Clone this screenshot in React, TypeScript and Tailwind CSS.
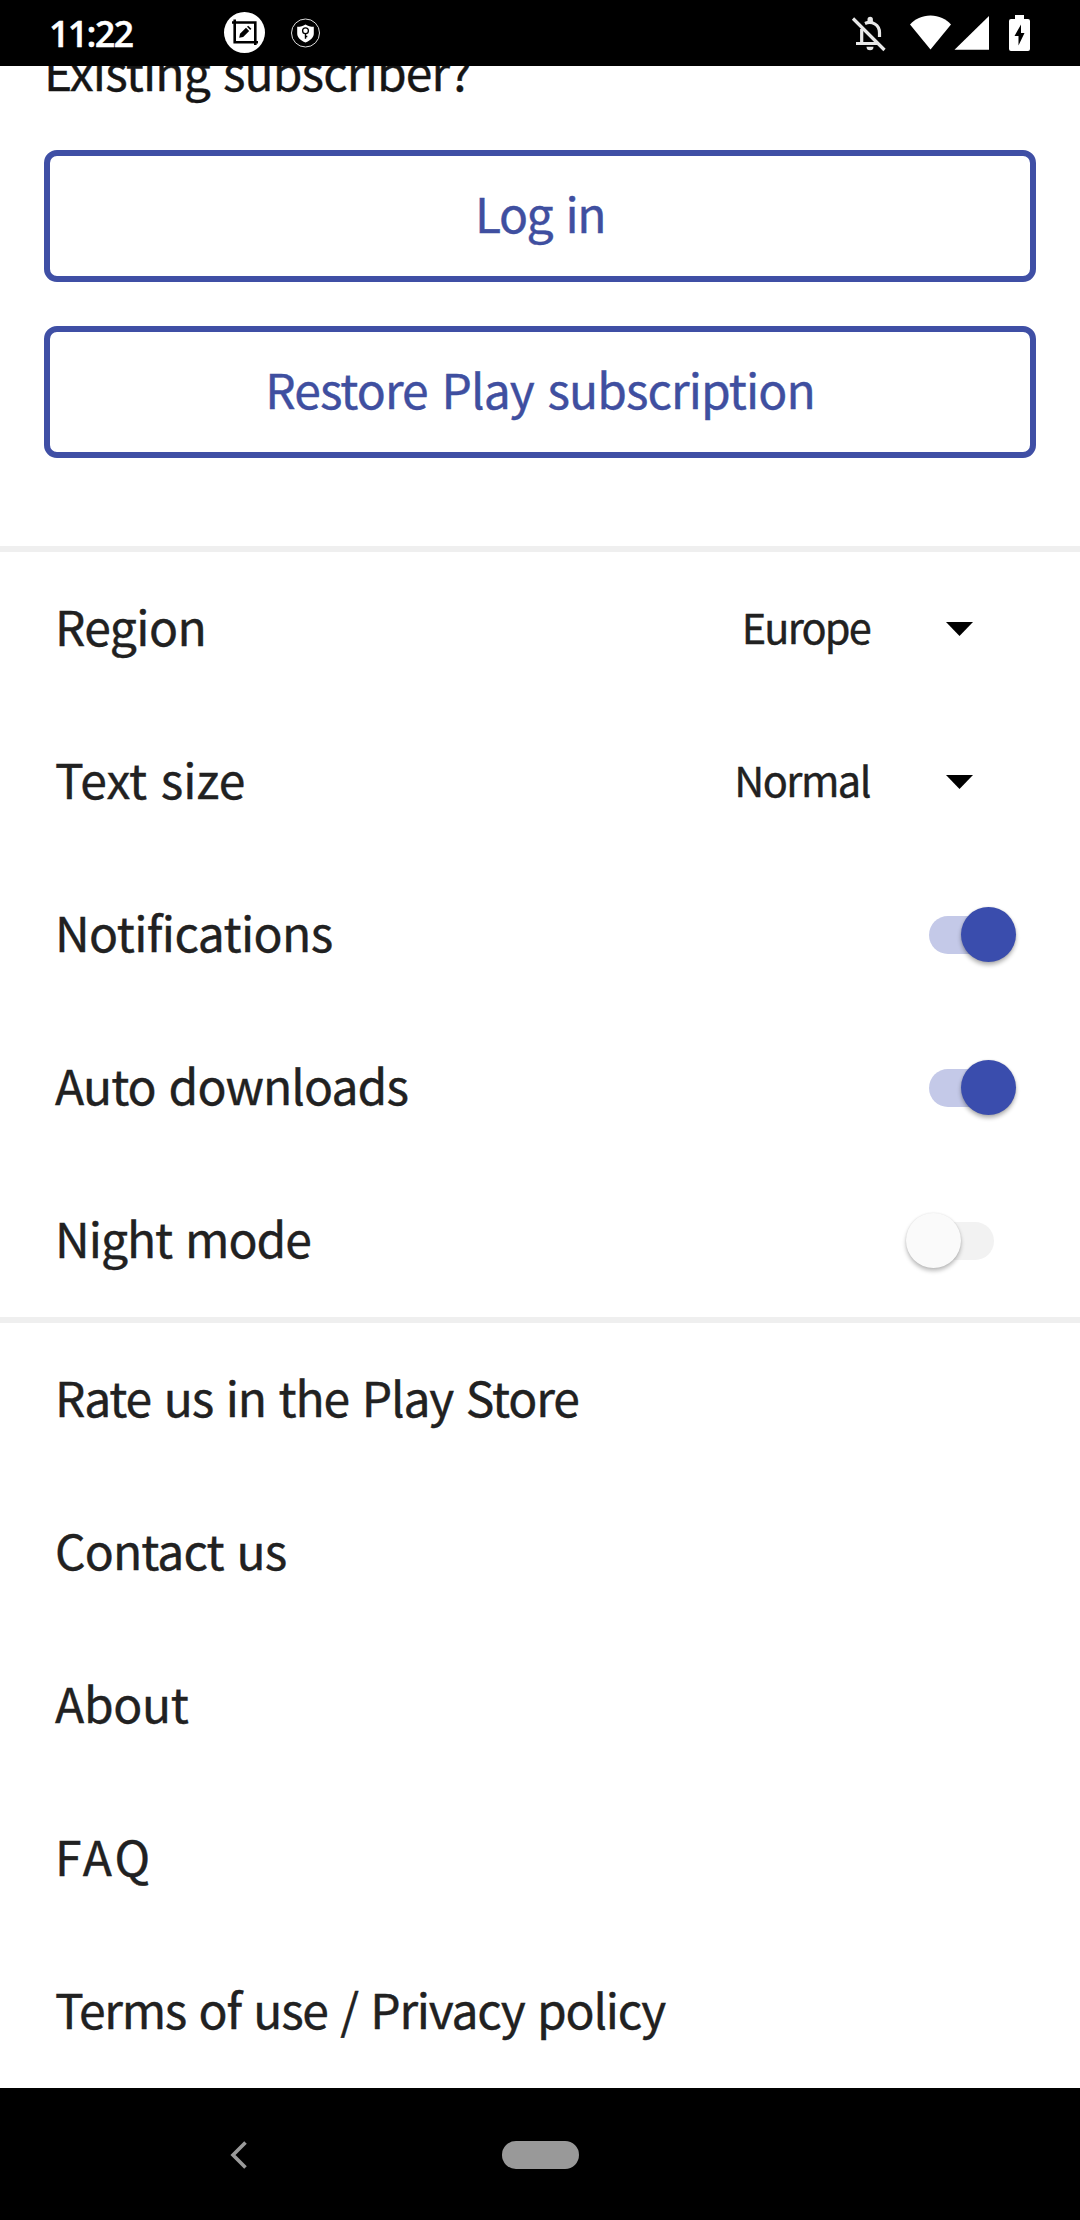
import { useState } from 'react'
import type { ReactNode } from 'react'
import clsx from 'clsx'

// [label, tracking]
const links: [string, string][] = [
  ['Rate us in the Play Store',     'tracking-[-1.12px]'],
  ['Contact us',                    'tracking-[-0.9px]'],
  ['About',                         'tracking-[-0.3px]'],
  ['FAQ',                           'tracking-[3.2px]'],
  ['Terms of use / Privacy policy', 'tracking-[-1.25px]'],
]

function StatusBar() {
  return (
    <header className="flex h-[66px] shrink-0 items-start bg-black text-white">
      <div className="mt-[9px] ml-[49px] w-[175px] font-['Open_Sans',sans-serif] text-[36px] leading-[49px] font-semibold tracking-[-1.8px]">
        11:22
      </div>

      {/* screenshot editor */}
      <svg className="mt-[12px] h-[41px] w-[41px]" viewBox="0 0 41 41">
        <circle cx="20.5" cy="20.5" r="20.5" fill="#fff" />
        <path d="M8 10.5H31.3V33M10.7 7.5V30.3H34" fill="none" stroke="#000" strokeWidth="2.6" />
        <path d="M15.2 25.8l.8-4 6-6 3.2 3.2-6 6z" fill="#000" />
        <path d="M23 14.8l1.2-1.1 3.2 3.1-1.2 1.2z" fill="#000" />
      </svg>

      {/* vpn shield */}
      <svg className="mt-[18px] ml-[26px] h-[30px] w-[30px]" viewBox="0 0 30 30">
        <circle cx="14.5" cy="15" r="14" fill="none" stroke="#ddd" strokeWidth="1" />
        <path d="M14.5 6.5c2.5 1.8 5 2.3 8.3 2.3v6.7c0 4-3.3 7-8.3 9-5-2-8.3-5-8.3-9V8.8c3.3 0 5.8-.5 8.3-2.3z" fill="#fff" />
        <circle cx="14.5" cy="12.8" r="2.9" fill="none" stroke="#000" strokeWidth="1.3" />
        <path d="M14.5 15.7v5M14.5 18.5h1.8" stroke="#000" strokeWidth="1.4" />
      </svg>

      {/* muted bell */}
      <svg className="mt-[15px] ml-[529px] h-[38px] w-[38px]" viewBox="0 0 38 38" fill="none" stroke="#e8e8e8">
        <path d="M11.7 14V28.5M6 28.5H27.5" strokeWidth="3.2" />
        <path d="M15 8.5c7-3.2 14.5 1.5 14.5 9V22" strokeWidth="3.2" />
        <path d="M17.5 7V4.5a2.7 2.7 0 0 1 5.4 0V7z" fill="#e8e8e8" stroke="none" />
        <path d="M16.5 31.7h7a3.5 3.5 0 0 1-7 0z" fill="#e8e8e8" stroke="none" />
        <path d="M3 3.5L34.5 35" strokeWidth="3.2" />
      </svg>

      <svg className="mt-[15px] ml-[22px] h-[35px] w-[41px]" viewBox="0 0 41 35" fill="#fff">
        <path d="M20.5 34.5L0 9.5C5 4 12 .5 20.5 .5S36 4 41 9.5z" />
      </svg>
      <svg className="mt-[15px] ml-[3px] h-[35px] w-[35px]" viewBox="0 0 35 35" fill="#fff">
        <path d="M.5 34.8H35V1z" />
      </svg>
      <svg className="mt-[15px] ml-[20px] h-[36px] w-[21px]" viewBox="0 0 21 36">
        <path d="M6 0h9v4h4a2 2 0 0 1 2 2v28a2 2 0 0 1-2 2H2a2 2 0 0 1-2-2V6a2 2 0 0 1 2-2h4z" fill="#fff" />
        <path d="M12 9.5L5.5 21h4v9.5L15.5 18H12z" fill="#000" />
      </svg>
    </header>
  )
}

function Row({ label, tracking = 'tracking-[-0.6px]', children }: { label: string; tracking?: string; children?: ReactNode }) {
  return (
    <div className="flex h-[153px] items-center justify-between pl-[55px]">
      <span className={clsx('pb-[7px]', tracking)}>{label}</span>
      {children}
    </div>
  )
}

function Dropdown({ value, tracking }: { value: string; tracking: string }) {
  return (
    <button className="flex items-center pr-[107px]">
      <span className={clsx('pb-[5px] text-[41.5px]', tracking)}>{value}</span>
      <svg className="ml-[76px] h-[14px] w-[27px]" viewBox="0 0 27 14">
        <path d="M0 0h27L13.5 14z" fill="#000" />
      </svg>
    </button>
  )
}

function Toggle({ on, onClick }: { on: boolean; onClick: () => void }) {
  return (
    <button
      role="switch"
      aria-checked={on}
      onClick={onClick}
      className={clsx('mr-[64px] flex h-[55px] w-[110px] items-center', on ? 'justify-end' : 'justify-start')}
    >
      {!on && <span className="z-10 h-[55px] w-[55px] shrink-0 rounded-full bg-[#fafafa] shadow-[0_3px_4px_rgba(0,0,0,0.26),0_0_2px_rgba(0,0,0,0.1)]" />}
      <span
        className={clsx(
          'h-[38px] w-[66px] shrink-0 rounded-full',
          on ? 'mr-[-34px] bg-[#c4c9e8]' : 'ml-[-33px] bg-[#f2f2f2]',
        )}
      />
      {on && <span className="h-[55px] w-[55px] shrink-0 rounded-full bg-[#3a4dad] shadow-[0_3px_4px_rgba(0,0,0,0.3),0_0_2px_rgba(0,0,0,0.12)]" />}
    </button>
  )
}

function OutlineButton({ children }: { children: ReactNode }) {
  return (
    <button className="flex h-[132px] w-full items-center justify-center rounded-[13px] border-6 border-[#3f4fa5] pb-[8px] text-[#3f4fa0] [word-spacing:4px]">
      {children}
    </button>
  )
}

export default function App() {
  const [notifications, setNotifications] = useState(true)
  const [downloads, setDownloads] = useState(true)
  const [night, setNight] = useState(false)

  return (
    <div className="flex h-[2220px] w-[1080px] flex-col overflow-hidden bg-white font-['Noto_Sans_CJK_SC',sans-serif] text-[48px] leading-normal text-[#212121] [word-spacing:3px] [-webkit-text-stroke:0.4px]">
      <StatusBar />

      <main className="flex-1 overflow-hidden">
        {/* scrolled partly under the status bar */}
        <section className="-mt-[31px] h-[511px] px-[44px]">
          <h2 className="mb-[45px] h-[70px] leading-[70px] tracking-[-0.85px] text-[#151515]">Existing subscriber?</h2>
          <div className="flex flex-col gap-[44px]">
            <OutlineButton><span className="tracking-[-1.5px]">Log in</span></OutlineButton>
            <OutlineButton><span className="tracking-[-0.95px]">Restore Play subscription</span></OutlineButton>
          </div>
        </section>

        <section className="border-t-6 border-[#efefef]">
          <Row label="Region"><Dropdown value="Europe" tracking="tracking-[-1.8px]" /></Row>
          <Row label="Text size" tracking="tracking-[0px]"><Dropdown value="Normal" tracking="tracking-[-1.5px]" /></Row>
          <Row label="Notifications"><Toggle on={notifications} onClick={() => setNotifications(!notifications)} /></Row>
          <Row label="Auto downloads" tracking="tracking-[-0.92px]"><Toggle on={downloads} onClick={() => setDownloads(!downloads)} /></Row>
          <Row label="Night mode" tracking="tracking-[-1px]"><Toggle on={night} onClick={() => setNight(!night)} /></Row>
        </section>

        <section className="border-t-6 border-[#efefef]">
          {links.map(([label, tracking]) => (
            <Row key={label} label={label} tracking={tracking} />
          ))}
        </section>
      </main>

      <nav className="flex h-[132px] shrink-0 items-center bg-black pt-[1px]">
        <svg className="ml-[230px] h-[28px] w-[18px]" viewBox="0 0 18 28">
          <path d="M15.5 1.5L3 14l12.5 12.5" fill="none" stroke="#9a9a9a" strokeWidth="3.6" />
        </svg>
        <span className="ml-[254px] h-[28px] w-[77px] rounded-full bg-[#999]" />
      </nav>
    </div>
  )
}
